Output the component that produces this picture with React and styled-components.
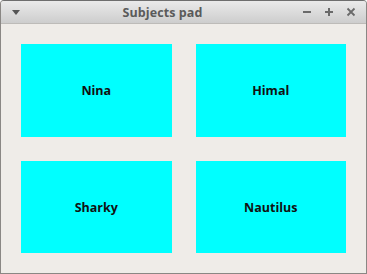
import React from 'react';
import styled, { createGlobalStyle } from 'styled-components';

const GlobalStyle = createGlobalStyle`
  html, body {
    margin: 0;
    padding: 0;
    background: #ffffff;
  }
  * {
    box-sizing: border-box;
  }
`;

const subjects = ['Nina', 'Himal', 'Sharky', 'Nautilus'];

const Window = styled.div`
  width: 367px;
  height: 274px;
  display: flex;
  flex-direction: column;
  border: 1px solid #8a8784;
  border-top-color: #6e6e6e;
  border-radius: 4px 4px 0 0;
  overflow: hidden;
  background: #efece8;
  font-family: "Open Sans", "DejaVu Sans", sans-serif;
`;

const TitleBar = styled.div`
  height: 23px;
  flex: none;
  display: flex;
  align-items: center;
  padding: 0 6px 0 8px;
  background: linear-gradient(#eaeaea, #cdcdcd);
  border-bottom: 1px solid #bdbbb8;
`;

const MenuButton = styled.div`
  width: 14px;
  display: flex;
  justify-content: center;
  svg {
    display: block;
  }
`;

const Title = styled.div`
  flex: 1;
  text-align: center;
  font-size: 12.5px;
  font-weight: 700;
  color: #5a5a5a;
  letter-spacing: 0.1px;
`;

const Controls = styled.div`
  display: flex;
  align-items: center;
  gap: 12px;
  padding-right: 4px;
  svg {
    display: block;
  }
`;

const Content = styled.div`
  flex: 1;
  display: grid;
  grid-template-columns: 1fr 1fr;
  grid-template-rows: 1fr 1fr;
  gap: 24px;
  padding: 20px;
`;

const Tile = styled.div`
  background: #00ffff;
  display: flex;
  align-items: center;
  justify-content: center;
  padding-top: 1px;
  font-size: 12.5px;
  font-weight: 700;
  color: #111111;
`;

export default function App() {
  return (
    <>
      <GlobalStyle />
      <Window>
        <TitleBar>
          <MenuButton>
            <svg width="8" height="5" viewBox="0 0 8 5">
              <path d="M0 0 H8 L4 5 Z" fill="#555" />
            </svg>
          </MenuButton>
          <Title>Subjects pad</Title>
          <Controls>
            <svg width="10" height="10" viewBox="0 0 10 10">
              <rect x="1" y="4" width="8" height="2" fill="#6a6a6a" />
            </svg>
            <svg width="10" height="10" viewBox="0 0 10 10">
              <rect x="1" y="4" width="8" height="2" fill="#6a6a6a" />
              <rect x="4" y="1" width="2" height="8" fill="#6a6a6a" />
            </svg>
            <svg width="10" height="10" viewBox="0 0 10 10">
              <path d="M1.5 1.5 L8.5 8.5 M8.5 1.5 L1.5 8.5" stroke="#6a6a6a" strokeWidth="1.8" />
            </svg>
          </Controls>
        </TitleBar>
        <Content>
          {subjects.map((name) => (
            <Tile key={name}>{name}</Tile>
          ))}
        </Content>
      </Window>
    </>
  );
}
